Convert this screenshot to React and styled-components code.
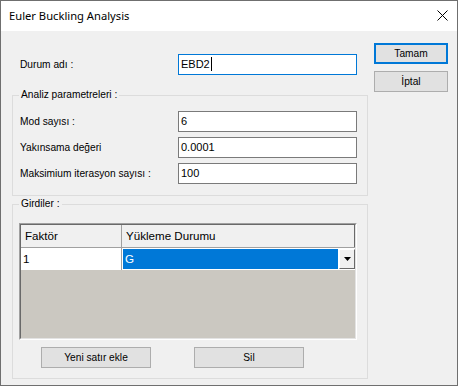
import styled, { createGlobalStyle } from 'styled-components';

const GlobalStyle = createGlobalStyle`
  html, body {
    margin: 0;
    padding: 0;
    background: #ffffff;
  }
  * {
    box-sizing: border-box;
  }
`;

const params = [
  { label: 'Mod sayısı :', value: '6' },
  { label: 'Yakınsama değeri', value: '0.0001' },
  { label: 'Maksimium iterasyon sayısı :', value: '100' },
];

function App() {
  return (
    <>
      <GlobalStyle />
      <Window>
        <TitleBar>
          <Title>Euler Buckling Analysis</Title>
          <CloseButton>
            <svg width="11" height="11" viewBox="0 0 11 11">
              <path d="M0.5 0.5 L10.5 10.5 M10.5 0.5 L0.5 10.5" stroke="#000" strokeWidth="1" />
            </svg>
          </CloseButton>
        </TitleBar>
        <Body>
          <MainColumn>
            <FieldRow $indent={8}>
              <Label>Durum adı :</Label>
              <TextField $focused>
                EBD2
                <Caret />
              </TextField>
            </FieldRow>

            <Group $top={20}>
              <GroupTitle>Analiz parametreleri :</GroupTitle>
              <ParamList>
                {params.map((p) => (
                  <FieldRow key={p.label} $indent={7}>
                    <Label>{p.label}</Label>
                    <TextField>{p.value}</TextField>
                  </FieldRow>
                ))}
              </ParamList>
            </Group>

            <Group $top={8}>
              <GroupTitle>Girdiler :</GroupTitle>
              <InputsBody>
                <GridFrame>
                  <GridInner>
                    <GridRow>
                      <HeaderCell>Faktör</HeaderCell>
                      <HeaderCell $last>Yükleme Durumu</HeaderCell>
                    </GridRow>
                    <GridRow $data>
                      <DataCell>1</DataCell>
                      <ComboCell>
                        <SelectedValue>G</SelectedValue>
                        <DropButton>
                          <svg width="7" height="4" viewBox="0 0 7 4">
                            <path d="M0 0 H7 L3.5 4 Z" fill="#000" />
                          </svg>
                        </DropButton>
                      </ComboCell>
                    </GridRow>
                  </GridInner>
                </GridFrame>
                <ButtonRow>
                  <Button>Yeni satır ekle</Button>
                  <Button>Sil</Button>
                </ButtonRow>
              </InputsBody>
            </Group>
          </MainColumn>

          <ButtonColumn>
            <DialogButton $default>Tamam</DialogButton>
            <DialogButton>İptal</DialogButton>
          </ButtonColumn>
        </Body>
      </Window>
    </>
  );
}

export default App;

const Window = styled.div`
  width: 458px;
  height: 386px;
  border: 1px solid #6f6f6f;
  display: flex;
  flex-direction: column;
  background: #f0f0f0;
  font-family: 'Liberation Sans', Arial, sans-serif;
  font-size: 10.2px;
  color: #000;
`;

const TitleBar = styled.div`
  height: 30px;
  background: #ffffff;
  display: flex;
  align-items: center;
  justify-content: space-between;
  padding: 0 9px 0 8px;
`;

const Title = styled.div`
  font-family: 'Noto Sans', 'Open Sans', sans-serif;
  font-size: 11.2px;
  color: #000;
  padding-bottom: 1px;
`;

const CloseButton = styled.div`
  width: 11px;
  height: 11px;
  display: flex;
  margin-bottom: 1px;
`;

const Body = styled.div`
  flex: 1;
  display: flex;
  align-items: flex-start;
  gap: 6px;
  padding: 12px 9px 0 11px;
`;

const MainColumn = styled.div`
  width: 356px;
  display: flex;
  flex-direction: column;
  padding-top: 11px;
`;

const FieldRow = styled.div`
  display: flex;
  align-items: center;
  height: 21px;
  padding-left: ${(p) => p.$indent}px;
`;

const Label = styled.div`
  width: 158px;
  white-space: nowrap;
  padding-bottom: 1px;
`;

const TextField = styled.div`
  width: 179px;
  height: 21px;
  background: #ffffff;
  border: 1px solid ${(p) => (p.$focused ? '#0078d7' : '#7a7a7a')};
  font-size: 11px;
  display: flex;
  align-items: center;
  padding: 0 0 2px 2px;
`;

const Caret = styled.span`
  display: inline-block;
  width: 1px;
  height: 14px;
  background: #000;
  margin-left: 1px;
`;

const Group = styled.div`
  position: relative;
  margin-top: ${(p) => p.$top}px;
  border: 1px solid #dcdcdc;
`;

const GroupTitle = styled.span`
  position: absolute;
  top: -8px;
  left: 6px;
  padding: 0 2px 0 2px;
  background: #f0f0f0;
  line-height: 14px;
`;

const ParamList = styled.div`
  display: flex;
  flex-direction: column;
  gap: 5px;
  padding: 15px 0 11px;
`;

const InputsBody = styled.div`
  display: flex;
  flex-direction: column;
  gap: 7px;
  padding: 18px 10px 10px 6px;
`;

const GridFrame = styled.div`
  width: 338px;
  height: 117px;
  border: 1px solid;
  border-color: #a0a0a0 #ffffff #ffffff #a0a0a0;
`;

const GridInner = styled.div`
  height: 100%;
  border: 1px solid;
  border-color: #696969 #e3e3e3 #e3e3e3 #696969;
  background: #cbc8c1;
`;

const GridRow = styled.div`
  display: grid;
  grid-template-columns: 101px 1fr;
  height: ${(p) => (p.$data ? 22 : 23)}px;
  background: ${(p) => (p.$data ? '#ffffff' : '#f0f0f0')};
  border-bottom: ${(p) => (p.$data ? 'none' : '1px solid #a0a0a0')};
`;

const HeaderCell = styled.div`
  font-size: 11.6px;
  display: flex;
  align-items: center;
  padding: 0 0 1px 4px;
  border-right: 1px solid ${(p) => (p.$last ? '#696969' : '#a0a0a0')};
`;

const DataCell = styled.div`
  font-size: 11.6px;
  display: flex;
  align-items: center;
  padding: 0 0 1px 2px;
  border-right: 1px solid #a0a0a0;
`;

const ComboCell = styled.div`
  display: flex;
  padding: 1px 0 1px 1px;
  gap: 1px;
`;

const SelectedValue = styled.div`
  flex: 1;
  background: #0078d7;
  color: #ffffff;
  font-size: 11.6px;
  display: flex;
  align-items: center;
  padding: 0 0 1px 2px;
`;

const DropButton = styled.div`
  width: 16px;
  background: #f0f0f0;
  border: 1px solid;
  border-color: #ffffff #696969 #696969 #ffffff;
  display: flex;
  align-items: center;
  justify-content: center;
`;

const ButtonRow = styled.div`
  display: flex;
  gap: 43px;
  padding-left: 22px;
`;

const Button = styled.div`
  width: 110px;
  height: 21px;
  background: #e1e1e1;
  border: 1px solid #adadad;
  display: flex;
  align-items: center;
  justify-content: center;
  padding-bottom: 1px;
`;

const ButtonColumn = styled.div`
  display: flex;
  flex-direction: column;
  gap: 7px;
`;

const DialogButton = styled.div`
  width: 74px;
  height: 21px;
  background: #e1e1e1;
  border: ${(p) => (p.$default ? '2px solid #0078d7' : '1px solid #adadad')};
  display: flex;
  align-items: center;
  justify-content: center;
  padding-bottom: 1px;
`;
